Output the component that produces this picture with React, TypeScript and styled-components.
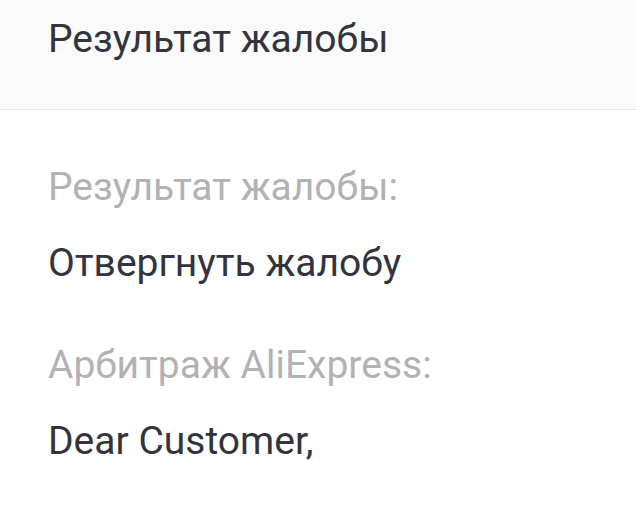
import styled, { createGlobalStyle } from 'styled-components'

const GlobalStyle = createGlobalStyle`
  html, body {
    margin: 0;
    padding: 0;
    background: #ffffff;
  }
  body {
    font-family: Roboto, 'Noto Sans', Arial, sans-serif;
    -webkit-font-smoothing: antialiased;
  }
`

const Page = styled.div`
  width: 636px;
  min-height: 522px;
  display: flex;
  flex-direction: column;
  background: #ffffff;
`

const Header = styled.header`
  height: 110px;
  box-sizing: border-box;
  padding: 15px 48px 0;
  background: #fafafb;
  border-bottom: 1px solid #e9e9ec;
`

const Title = styled.h1`
  margin: 0;
  font-size: 39px;
  font-weight: 400;
  line-height: 48px;
  color: #33343d;
`

const Body = styled.div`
  display: flex;
  flex-direction: column;
  padding: 53px 48px 0;
  gap: 54px;
`

const Field = styled.div`
  display: flex;
  flex-direction: column;
  gap: 28px;
`

const Label = styled.div`
  font-size: 39px;
  line-height: 48px;
  color: #b2b2b5;
`

const Value = styled.div`
  font-size: 39px;
  line-height: 48px;
  color: #33343d;
`

const fields = [
  { label: 'Результат жалобы:', value: 'Отвергнуть жалобу' },
  { label: 'Арбитраж AliExpress:', value: 'Dear Customer,' },
]

export default function App() {
  return (
    <>
      <GlobalStyle />
      <Page>
        <Header>
          <Title>Результат жалобы</Title>
        </Header>
        <Body>
          {fields.map((f) => (
            <Field key={f.label}>
              <Label>{f.label}</Label>
              <Value>{f.value}</Value>
            </Field>
          ))}
        </Body>
      </Page>
    </>
  )
}
